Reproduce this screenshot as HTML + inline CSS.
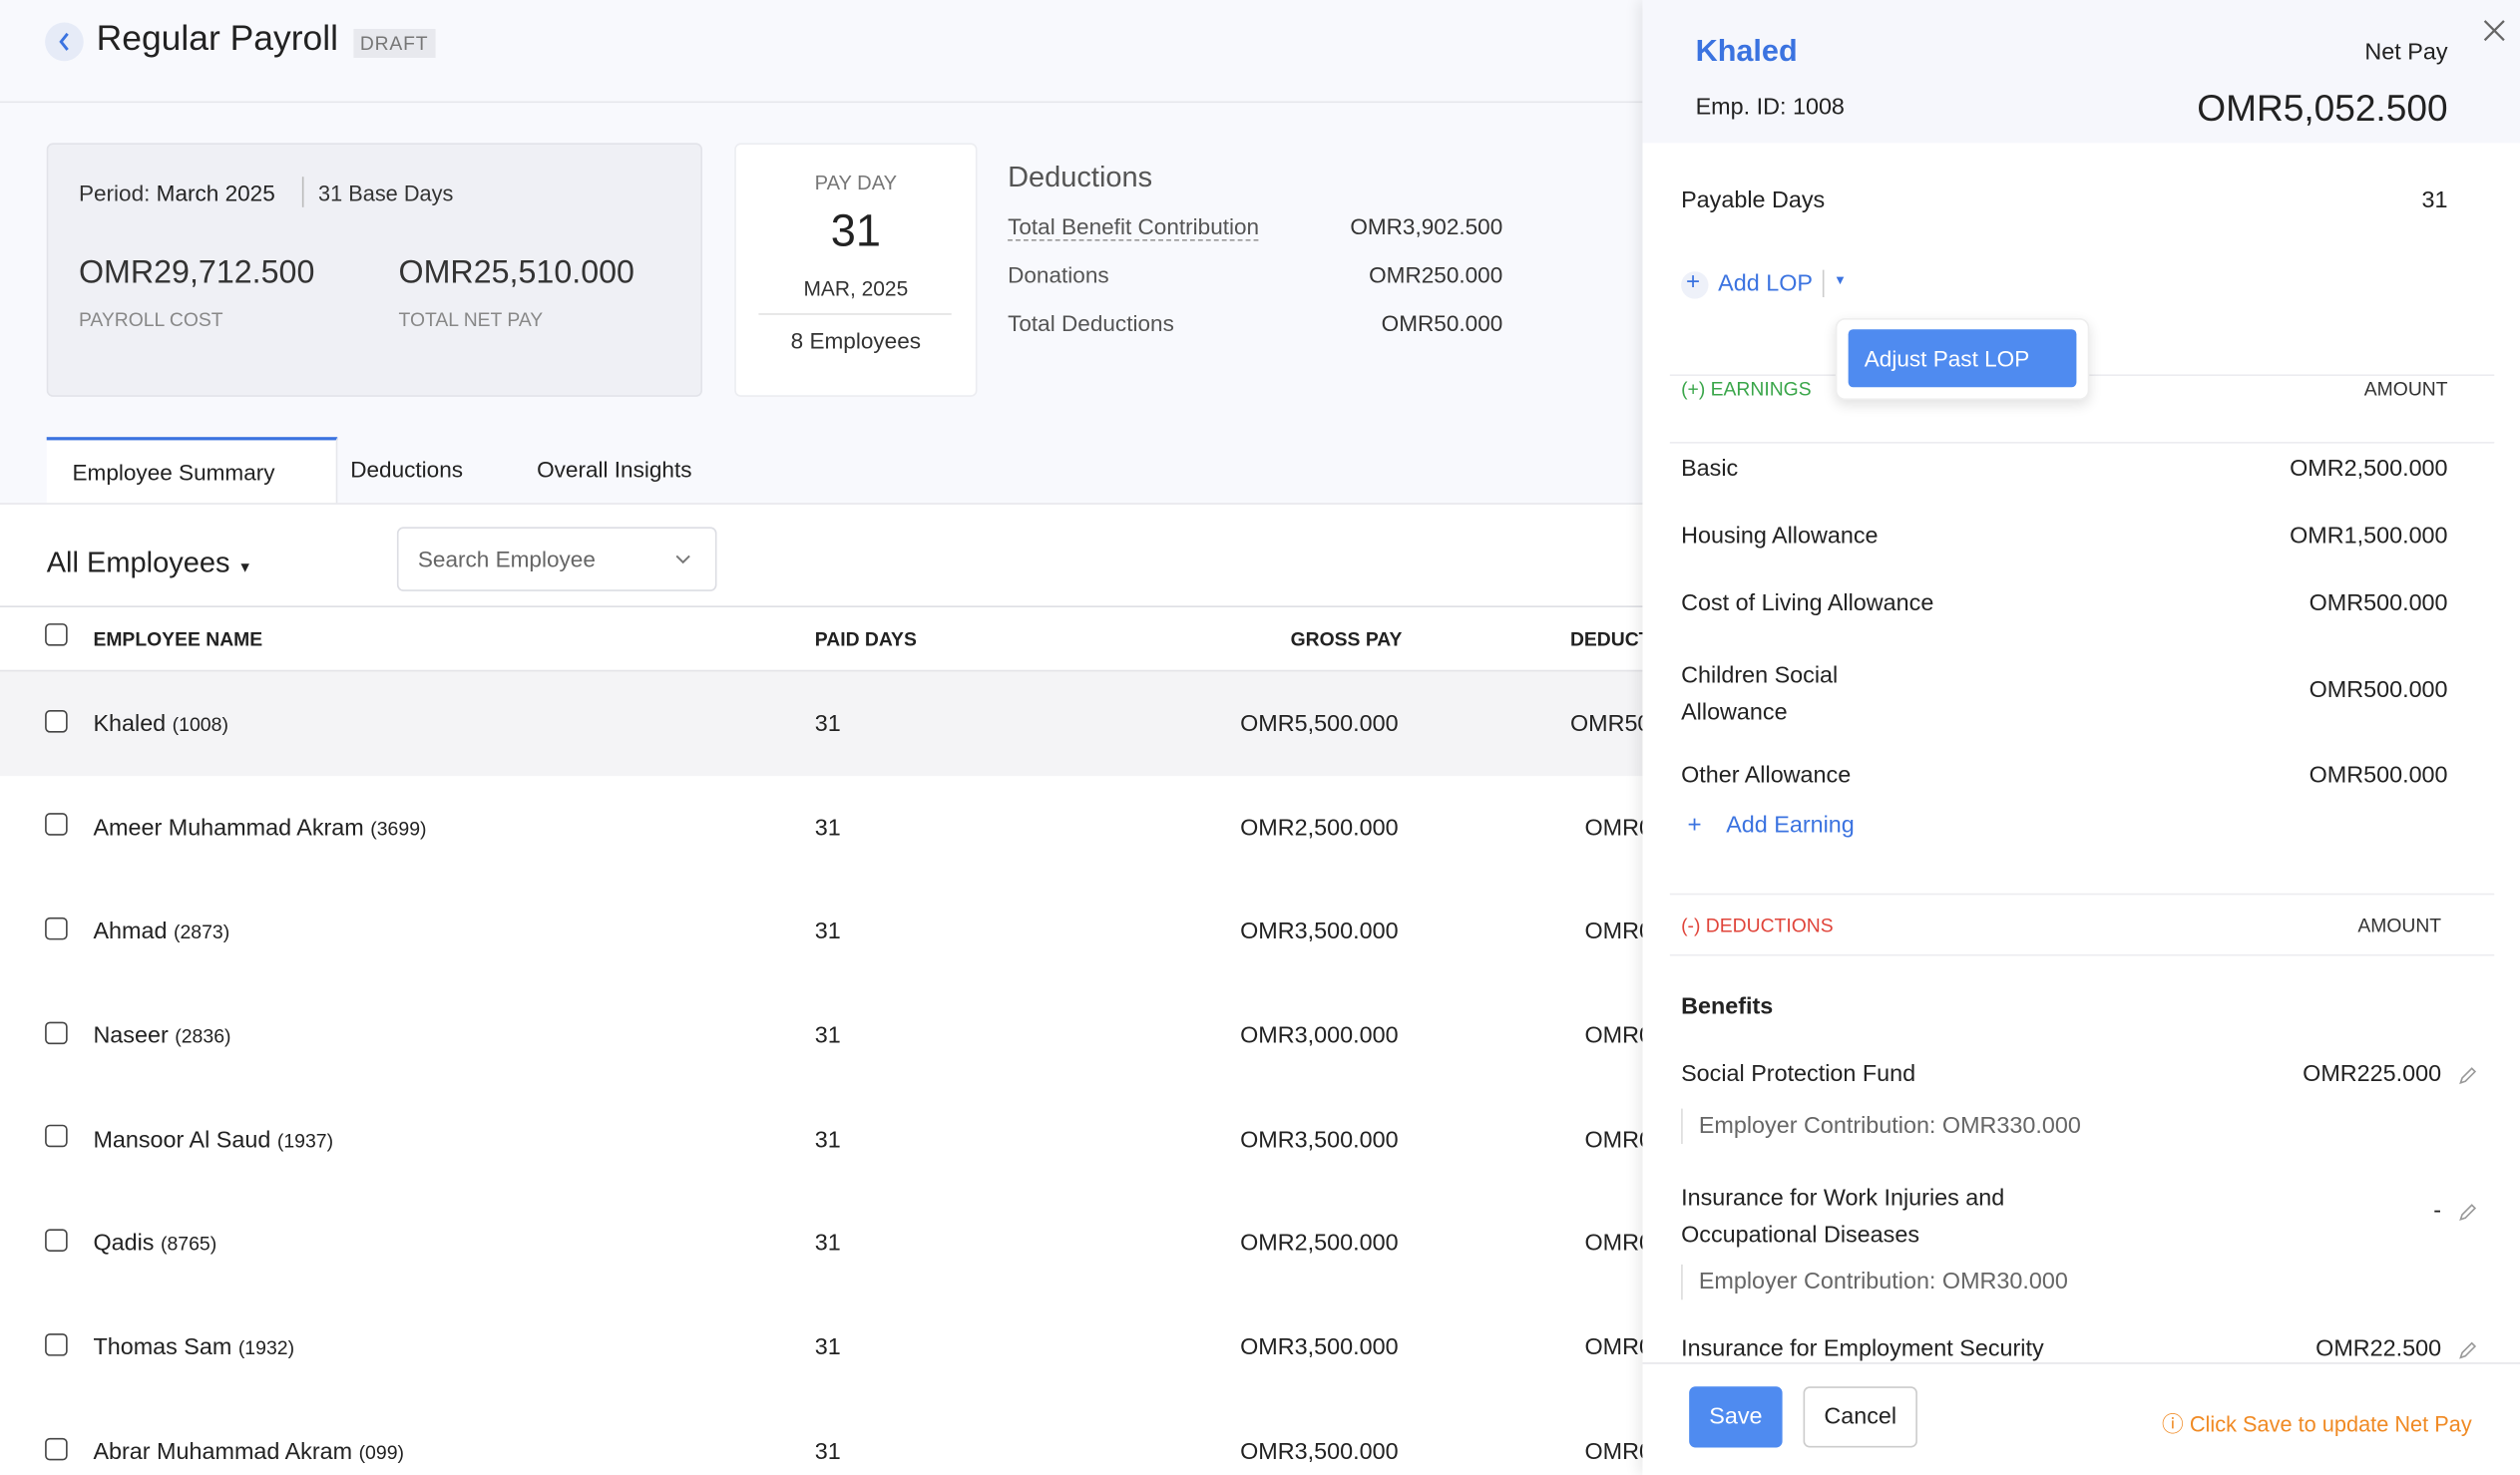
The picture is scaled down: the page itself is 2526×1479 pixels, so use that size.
<!DOCTYPE html>
<html><head><meta charset="utf-8"><style>
*{box-sizing:border-box;margin:0;padding:0}
html,body{width:2526px;height:1478px;overflow:hidden;background:#f8f9fd}
#w{position:absolute;left:0;top:0;width:1568px;height:918px;transform:scale(1.6110);transform-origin:0 0;font-family:"Liberation Sans",sans-serif;color:#222;background:#f8f9fd}
.a{position:absolute;white-space:nowrap}
.r{text-align:right}
.cb{position:absolute;width:14px;height:14px;border:1.5px solid #444;border-radius:3px;background:#fff}
.row .a{font-size:14.5px}
</style></head><body><div id="w">
<!-- header -->
<div class="a" style="left:28px;top:14px;width:24px;height:24px;border-radius:12px;background:#e6ebf7"></div>
<svg class="a" style="left:34px;top:19px" width="12" height="14"><path d="M8 2 L4 7 L8 12" stroke="#3b73e0" stroke-width="1.8" fill="none"/></svg>
<div class="a" style="left:60px;top:11px;font-size:22px;color:#222">Regular Payroll</div>
<div class="a" style="left:220px;top:18px;background:#e8e9ee;color:#777;font-size:12px;padding:2px 4px;letter-spacing:.5px">DRAFT</div>
<div class="a" style="left:0;top:63px;width:1022px;height:1px;background:#e6e7ec"></div>
<!-- summary card -->
<div class="a" style="left:29px;top:89px;width:408px;height:158px;background:#eff0f5;border:1px solid #e2e3e9;border-radius:4px"></div>
<div class="a" style="left:49px;top:112px;font-size:14px;color:#333">Period: <span style="color:#222">March 2025</span></div>
<div class="a" style="left:188px;top:110px;width:1px;height:19px;background:#bbb"></div>
<div class="a" style="left:198px;top:113px;font-size:13.5px;color:#333">31 Base Days</div>
<div class="a" style="left:49px;top:159px;font-size:20px;color:#333">OMR29,712.500</div>
<div class="a" style="left:248px;top:159px;font-size:20px;color:#333">OMR25,510.000</div>
<div class="a" style="left:49px;top:192px;font-size:12px;color:#888">PAYROLL COST</div>
<div class="a" style="left:248px;top:192px;font-size:12px;color:#888">TOTAL NET PAY</div>
<div class="a" style="left:457px;top:89px;width:151px;height:158px;background:#fff;border:1px solid #ecedf1;border-radius:4px"></div>
<div class="a" style="left:457px;top:107px;width:151px;text-align:center;font-size:12.5px;color:#777">PAY DAY</div>
<div class="a" style="left:457px;top:128px;width:151px;text-align:center;font-size:28px;color:#222">31</div>
<div class="a" style="left:457px;top:172px;width:151px;text-align:center;font-size:13px;color:#333">MAR, 2025</div>
<div class="a" style="left:472px;top:195px;width:120px;height:1px;background:#e2e2e2"></div>
<div class="a" style="left:457px;top:204px;width:151px;text-align:center;font-size:14px;color:#333">8 Employees</div>
<div class="a" style="left:627px;top:100px;font-size:18px;color:#555">Deductions</div>
<div class="a" style="left:627px;top:133px;font-size:14px;color:#555;border-bottom:1px dashed #999">Total Benefit Contribution</div>
<div class="a r" style="left:780px;width:155px;top:133px;font-size:14px;color:#333">OMR3,902.500</div>
<div class="a" style="left:627px;top:163px;font-size:14px;color:#555">Donations</div>
<div class="a r" style="left:780px;width:155px;top:163px;font-size:14px;color:#333">OMR250.000</div>
<div class="a" style="left:627px;top:193px;font-size:14px;color:#555">Total Deductions</div>
<div class="a r" style="left:780px;width:155px;top:193px;font-size:14px;color:#333">OMR50.000</div>
<!-- tabs -->
<div class="a" style="left:29px;top:272px;width:181px;height:42px;background:#fff;border-top:2px solid #3b73e0;border-right:1px solid #e6e7ec"></div>
<div class="a" style="left:45px;top:286px;font-size:14px;color:#222">Employee Summary</div>
<div class="a" style="left:218px;top:284px;font-size:14px;color:#222">Deductions</div>
<div class="a" style="left:334px;top:284px;font-size:14px;color:#222">Overall Insights</div>
<div class="a" style="left:0;top:313px;width:1022px;height:605px;background:#fff;border-top:1px solid #e6e7ec"></div>
<div class="a" style="left:29px;top:340px;font-size:18px;color:#222">All Employees <span style="font-size:9px">▼</span></div>
<div class="a" style="left:247px;top:328px;width:199px;height:40px;border:1px solid #dcdde3;border-radius:4px;background:#fff"></div>
<div class="a" style="left:260px;top:340px;font-size:14px;color:#666">Search Employee</div>
<svg class="a" style="left:419px;top:343px" width="12" height="10"><path d="M2 3 L6 7 L10 3" stroke="#777" stroke-width="1.2" fill="none"/></svg>
<div class="a" style="left:0;top:377px;width:1022px;height:1px;background:#dedfe4"></div>
<div class="cb" style="left:28px;top:388px"></div>
<div class="a" style="left:58px;top:391px;font-size:12px;font-weight:bold;color:#222">EMPLOYEE NAME</div>
<div class="a" style="left:507px;top:391px;font-size:12px;font-weight:bold;color:#222">PAID DAYS</div>
<div class="a" style="left:803px;top:391px;font-size:12px;font-weight:bold;color:#222">GROSS PAY</div>
<div class="a" style="left:977px;top:391px;font-size:12px;font-weight:bold;color:#222">DEDUCT</div>
<div class="a" style="left:0;top:417px;width:1022px;height:66px;background:#f4f4f6;border-top:1px solid #e4e4e8"></div>
<div class="row">
<div class="cb" style="left:28px;top:442px"></div><div class="a" style="left:58px;top:443px">Khaled <small>(1008)</small></div><div class="a" style="left:507px;top:443px">31</div><div class="a r" style="left:700px;width:170px;top:443px">OMR5,500.000</div><div class="a" style="left:977px;top:443px">OMR50</div>
<div class="cb" style="left:28px;top:506px"></div><div class="a" style="left:58px;top:508px">Ameer Muhammad Akram <small>(3699)</small></div><div class="a" style="left:507px;top:508px">31</div><div class="a r" style="left:700px;width:170px;top:508px">OMR2,500.000</div><div class="a" style="left:986px;top:508px">OMR0</div>
<div class="cb" style="left:28px;top:571px"></div><div class="a" style="left:58px;top:572px">Ahmad <small>(2873)</small></div><div class="a" style="left:507px;top:572px">31</div><div class="a r" style="left:700px;width:170px;top:572px">OMR3,500.000</div><div class="a" style="left:986px;top:572px">OMR0</div>
<div class="cb" style="left:28px;top:636px"></div><div class="a" style="left:58px;top:637px">Naseer <small>(2836)</small></div><div class="a" style="left:507px;top:637px">31</div><div class="a r" style="left:700px;width:170px;top:637px">OMR3,000.000</div><div class="a" style="left:986px;top:637px">OMR0</div>
<div class="cb" style="left:28px;top:700px"></div><div class="a" style="left:58px;top:702px">Mansoor Al Saud <small>(1937)</small></div><div class="a" style="left:507px;top:702px">31</div><div class="a r" style="left:700px;width:170px;top:702px">OMR3,500.000</div><div class="a" style="left:986px;top:702px">OMR0</div>
<div class="cb" style="left:28px;top:765px"></div><div class="a" style="left:58px;top:766px">Qadis <small>(8765)</small></div><div class="a" style="left:507px;top:766px">31</div><div class="a r" style="left:700px;width:170px;top:766px">OMR2,500.000</div><div class="a" style="left:986px;top:766px">OMR0</div>
<div class="cb" style="left:28px;top:830px"></div><div class="a" style="left:58px;top:831px">Thomas Sam <small>(1932)</small></div><div class="a" style="left:507px;top:831px">31</div><div class="a r" style="left:700px;width:170px;top:831px">OMR3,500.000</div><div class="a" style="left:986px;top:831px">OMR0</div>
<div class="cb" style="left:28px;top:895px"></div><div class="a" style="left:58px;top:896px">Abrar Muhammad Akram <small>(099)</small></div><div class="a" style="left:507px;top:896px">31</div><div class="a r" style="left:700px;width:170px;top:896px">OMR3,500.000</div><div class="a" style="left:986px;top:896px">OMR0</div>
</div>
<!-- side panel -->
<div class="a" style="left:1022px;top:0;width:546px;height:918px;background:#fff;box-shadow:-3px 0 8px rgba(0,0,0,.08)"></div>
<div class="a" style="left:1022px;top:0;width:546px;height:89px;background:#f6f7fc"></div>
<div class="a" style="left:1055px;top:22px;font-size:19px;font-weight:bold;color:#3b73e0">Khaled</div>
<div class="a" style="left:1055px;top:59px;font-size:14.5px;color:#222">Emp. ID: 1008</div>
<div class="a r" style="left:1380px;width:143px;top:25px;font-size:14.5px;color:#222">Net Pay</div>
<div class="a r" style="left:1300px;width:223px;top:54px;font-size:23px;color:#222">OMR5,052.500</div>
<svg class="a" style="left:1545px;top:12px" width="14" height="14"><path d="M1 1 L13 13 M13 1 L1 13" stroke="#666" stroke-width="1.4"/></svg>
<div class="a" style="left:1046px;top:117px;font-size:14.5px">Payable Days</div>
<div class="a r" style="left:1450px;width:73px;top:117px;font-size:14.5px">31</div>
<div class="a" style="left:1046px;top:169px;width:17px;height:17px;border-radius:9px;background:#eef1f9"></div>
<div class="a" style="left:1049px;top:167px;font-size:15px;color:#3b73e0">+</div>
<div class="a" style="left:1069px;top:169px;font-size:14.5px;color:#3b73e0">Add LOP</div>
<div class="a" style="left:1134px;top:168px;width:1px;height:17px;background:#ccc"></div>
<div class="a" style="left:1141px;top:170px;font-size:8px;color:#3b73e0">▼</div>
<div class="a" style="left:1039px;top:233px;width:513px;height:1px;background:#ececf0"></div>
<div class="a" style="left:1039px;top:275px;width:513px;height:1px;background:#ececf0"></div>
<div class="a" style="left:1046px;top:235px;font-size:12px;color:#3aa64a">(+) EARNINGS</div>
<div class="a r" style="left:1400px;width:123px;top:235px;font-size:12px;color:#333">AMOUNT</div>
<div class="a" style="left:1142px;top:198px;width:158px;height:51px;background:#fff;border:1px solid #eee;border-radius:6px;box-shadow:0 3px 8px rgba(0,0,0,.12)"></div>
<div class="a" style="left:1150px;top:205px;width:142px;height:36px;background:#4f8bf0;border-radius:3px;color:#fff;font-size:14px;padding:10px 0 0 10px">Adjust Past LOP</div>
<div class="a" style="left:1046px;top:284px;font-size:14.5px">Basic</div><div class="a r" style="left:1300px;width:223px;top:284px;font-size:14.5px">OMR2,500.000</div>
<div class="a" style="left:1046px;top:326px;font-size:14.5px">Housing Allowance</div><div class="a r" style="left:1300px;width:223px;top:326px;font-size:14.5px">OMR1,500.000</div>
<div class="a" style="left:1046px;top:368px;font-size:14.5px">Cost of Living Allowance</div><div class="a r" style="left:1300px;width:223px;top:368px;font-size:14.5px">OMR500.000</div>
<div class="a" style="left:1046px;top:410px;font-size:14.5px;line-height:23px">Children Social<br>Allowance</div><div class="a r" style="left:1300px;width:223px;top:422px;font-size:14.5px">OMR500.000</div>
<div class="a" style="left:1046px;top:475px;font-size:14.5px">Other Allowance</div><div class="a r" style="left:1300px;width:223px;top:475px;font-size:14.5px">OMR500.000</div>
<div class="a" style="left:1050px;top:505px;font-size:15px;color:#3b73e0">+</div>
<div class="a" style="left:1074px;top:506px;font-size:14.5px;color:#3b73e0">Add Earning</div>
<div class="a" style="left:1039px;top:556px;width:513px;height:1px;background:#ececf0"></div>
<div class="a" style="left:1039px;top:594px;width:513px;height:1px;background:#ececf0"></div>
<div class="a" style="left:1046px;top:569px;font-size:12px;color:#e0443a">(-) DEDUCTIONS</div>
<div class="a r" style="left:1400px;width:119px;top:569px;font-size:12px;color:#333">AMOUNT</div>
<div class="a" style="left:1046px;top:619px;font-size:14.5px;font-weight:bold;color:#222">Benefits</div>
<div class="a" style="left:1046px;top:661px;font-size:14.5px">Social Protection Fund</div><div class="a r" style="left:1300px;width:219px;top:661px;font-size:14.5px">OMR225.000</div>
<div class="a" style="left:1046px;top:690px;width:1px;height:22px;background:#ddd"></div>
<div class="a" style="left:1057px;top:693px;font-size:14.5px;color:#666">Employer Contribution: OMR330.000</div>
<div class="a" style="left:1046px;top:735px;font-size:14.5px;line-height:23px">Insurance for Work Injuries and<br>Occupational Diseases</div><div class="a r" style="left:1300px;width:219px;top:746px;font-size:14.5px">-</div>
<div class="a" style="left:1046px;top:787px;width:1px;height:22px;background:#ddd"></div>
<div class="a" style="left:1057px;top:790px;font-size:14.5px;color:#666">Employer Contribution: OMR30.000</div>
<div class="a" style="left:1046px;top:832px;font-size:14.5px">Insurance for Employment Security</div><div class="a r" style="left:1300px;width:219px;top:832px;font-size:14.5px">OMR22.500</div>
<svg class="a" style="left:1529px;top:664px" width="12" height="12"><path d="M2 10 L3 7 L9 1 L11 3 L5 9 Z" stroke="#999" fill="none"/></svg>
<svg class="a" style="left:1529px;top:749px" width="12" height="12"><path d="M2 10 L3 7 L9 1 L11 3 L5 9 Z" stroke="#999" fill="none"/></svg>
<svg class="a" style="left:1529px;top:835px" width="12" height="12"><path d="M2 10 L3 7 L9 1 L11 3 L5 9 Z" stroke="#999" fill="none"/></svg>
<div class="a" style="left:1022px;top:848px;width:546px;height:70px;background:#fff;border-top:1px solid #e6e6ea"></div>
<div class="a" style="left:1051px;top:863px;width:58px;height:38px;background:#4f8bf0;border-radius:4px;color:#fff;font-size:14.5px;text-align:center;line-height:38px">Save</div>
<div class="a" style="left:1122px;top:863px;width:71px;height:38px;border:1px solid #ccc;border-radius:4px;font-size:14.5px;text-align:center;line-height:36px">Cancel</div>
<div class="a r" style="left:1320px;width:218px;top:875px;font-size:13.5px;color:#f08a24">ⓘ Click Save to update Net Pay</div>
</div></body></html>
